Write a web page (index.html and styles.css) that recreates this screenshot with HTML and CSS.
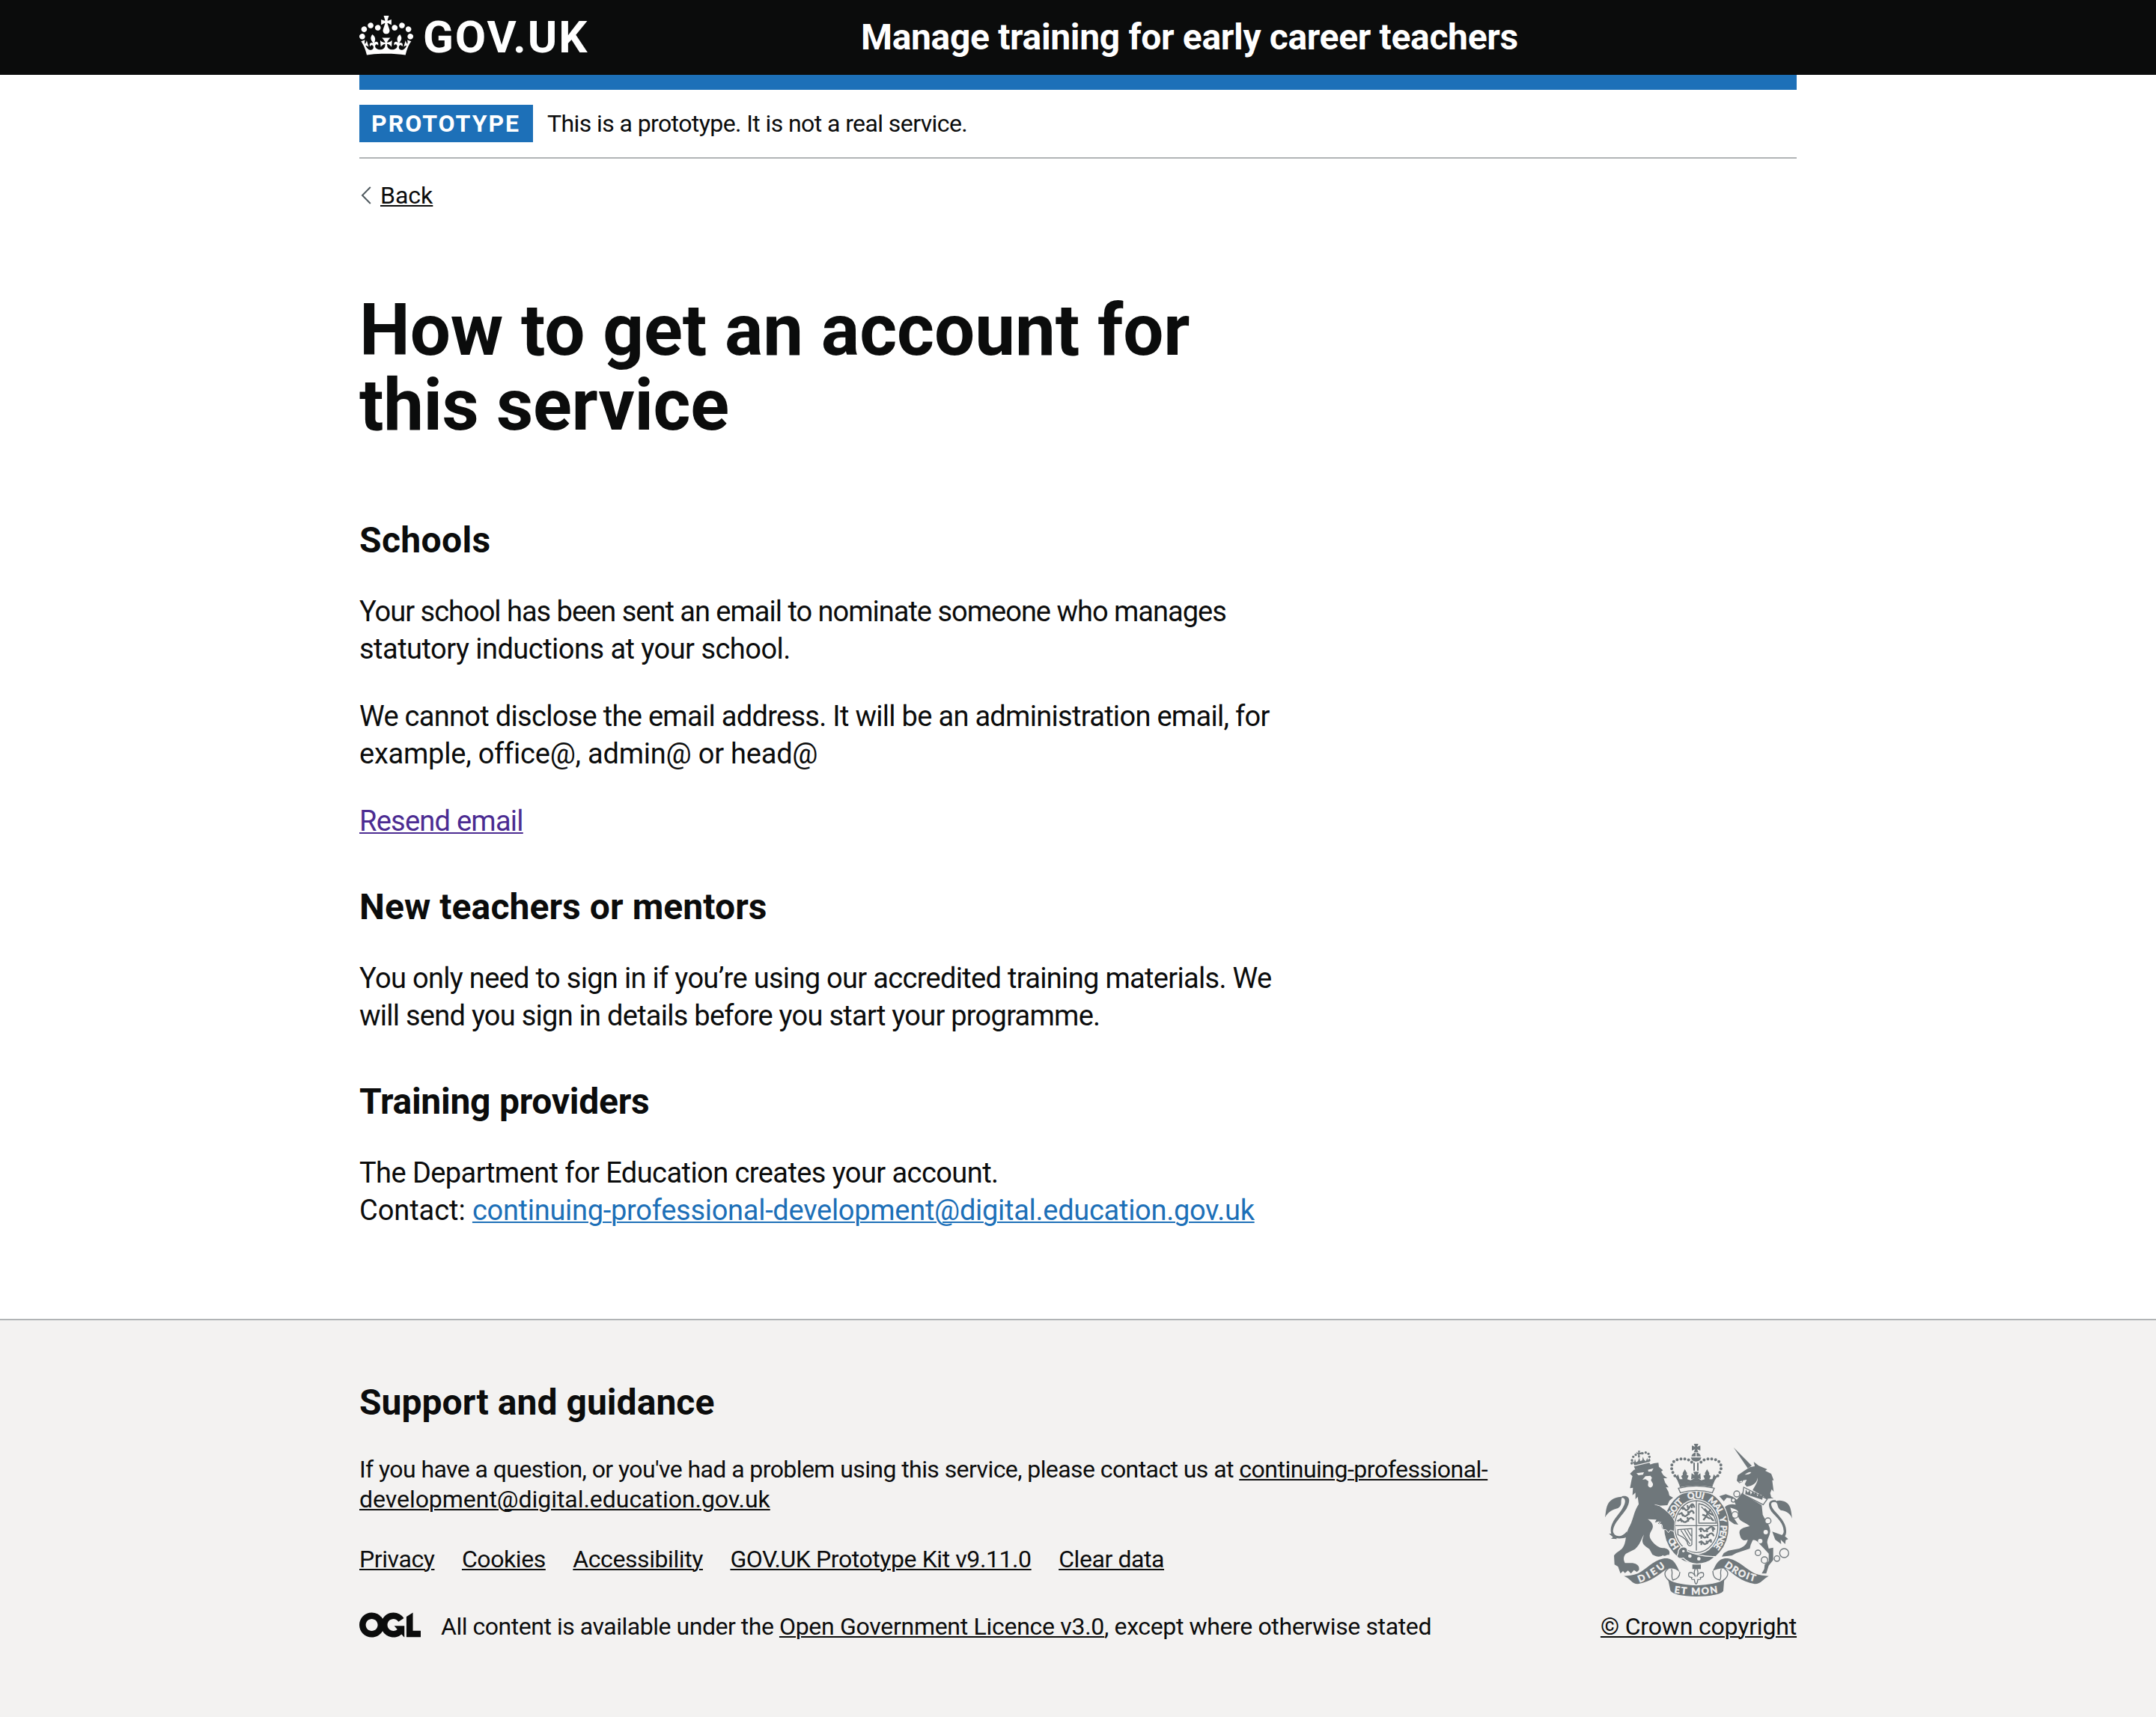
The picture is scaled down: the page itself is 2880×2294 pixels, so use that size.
FILE: index.html
```html
<!DOCTYPE html>
<html lang="en">
<head>
<meta charset="utf-8">
<title>How to get an account for this service</title>
<link rel="stylesheet" href="styles.css">
</head>
<body>
<header class="header">
  <div class="container header-inner">
    <a class="logo" href="#">
      <svg class="logo-crown" viewBox="0 0 132 97" aria-hidden="true"><path fill="currentColor" fill-rule="evenodd" d="M25 30.2c3.5 1.5 7.7-.2 9.1-3.7 1.5-3.6-.2-7.8-3.9-9.2-3.6-1.4-7.6.3-9.1 3.9-1.4 3.5.3 7.5 3.9 9zM9 39.5c3.6 1.5 7.8-.2 9.2-3.7 1.5-3.6-.2-7.8-3.9-9.1-3.6-1.5-7.6.2-9.1 3.8-1.4 3.5.3 7.5 3.8 9zM4.4 57.2c3.5 1.5 7.7-.2 9.1-3.8 1.5-3.6-.2-7.7-3.9-9.1-3.5-1.5-7.6.3-9.1 3.8-1.4 3.5.3 7.6 3.9 9.1zm38.3-21.4c3.5 1.5 7.7-.2 9.1-3.8 1.5-3.6-.2-7.7-3.9-9.1-3.6-1.5-7.6.3-9.1 3.8-1.3 3.6.4 7.7 3.9 9.1zm64.4-5.6c-3.6 1.5-7.8-.2-9.1-3.7-1.5-3.6.2-7.8 3.8-9.2 3.6-1.4 7.7.3 9.2 3.9 1.3 3.5-.4 7.5-3.9 9zm15.9 9.3c-3.6 1.5-7.7-.2-9.1-3.7-1.5-3.6.2-7.8 3.7-9.1 3.6-1.5 7.7.2 9.2 3.8 1.5 3.5-.3 7.5-3.8 9zm4.7 17.7c-3.6 1.5-7.8-.2-9.2-3.8-1.5-3.6.2-7.7 3.9-9.1 3.6-1.5 7.7.3 9.2 3.8 1.3 3.5-.4 7.6-3.9 9.1zM89.3 35.8c-3.6 1.5-7.8-.2-9.2-3.8-1.4-3.6.2-7.7 3.9-9.1 3.6-1.5 7.7.3 9.2 3.8 1.4 3.6-.3 7.7-3.9 9.1zM69.7 17.7l8.9 4.7V9.3l-8.9 2.8c-.2-.3-.5-.6-.9-.9L72.4 0H59.6l3.5 11.2c-.3.3-.6.5-.9.9l-8.8-2.8v13.1l8.8-4.7c.3.3.6.7.9.9l-5 15.4v.1c-.2.8-.4 1.6-.4 2.4 0 4.1 3.1 7.5 7 8.1h.2c.3 0 .7.1 1 .1.4 0 .7 0 1-.1h.2c4-.6 7.1-4.1 7.1-8.1 0-.8-.1-1.7-.4-2.4V34l-5.1-15.4c.4-.2.7-.6 1-.9zM66 92.8c16.9 0 32.8 1.1 47.1 3.2 4-16.9 8.9-26.7 14-33.5l-9.6-3.4c1 4.9 1.1 7.2 0 10.2-1.5-1.4-3-4.3-4.2-8.7L108.6 76c2.8-2 5-3.2 7.5-3.3-4.4 9.4-10 11.9-13.6 11.2-4.3-.8-6.3-4.6-5.6-7.9 1-4.7 5.7-5.9 8-.5 4.3-8.7-3-11.4-7.6-8.8 7.1-7.2 7.9-13.5 2.1-21.1-8 6.1-8.1 12.3-4.5 20.8-4.7-5.4-12.1-2.5-9.5 6.2 3.4-5.2 7.9-2 7.2 3.1-.6 4.3-6.4 7.8-13.5 7.2-10.3-.9-10.9-8-11.2-13.8 2.5-.5 7.1 1.8 11 7.3L80.2 60c-4.1 4.4-8 5.3-12.3 5.4 1.4-4.4 8-11.6 8-11.6H55.5s6.4 7.2 7.9 11.6c-4.2-.1-8-1-12.3-5.4l1.4 16.4c3.9-5.5 8.5-7.7 10.9-7.3-.3 5.8-.9 12.8-11.1 13.8-7.2.6-12.9-2.9-13.5-7.2-.7-5 3.8-8.3 7.1-3.1 2.7-8.7-4.6-11.6-9.4-6.2 3.7-8.5 3.6-14.7-4.6-20.8-5.8 7.6-5 13.9 2.2 21.1-4.7-2.6-11.9.1-7.7 8.8 2.3-5.5 7.1-4.2 8.1.5.7 3.3-1.3 7.1-5.7 7.9-3.5.7-9-1.8-13.5-11.2 2.5.1 4.7 1.3 7.5 3.3l-4.7-15.4c-1.2 4.4-2.7 7.2-4.3 8.7-1.1-3-.9-5.3 0-10.2l-9.5 3.4c5 6.9 9.9 16.7 14 33.5 14.8-2.1 30.8-3.2 47.7-3.2z"/></svg>
      <span class="logo-text">GOV.UK</span>
    </a>
    <a class="service-name" href="#">Manage training for early career teachers</a>
  </div>
</header>

<div class="container">
  <div class="header-bar"></div>
  <div class="phase-banner">
    <strong class="tag">PROTOTYPE</strong>
    <span class="phase-text">This is a prototype. It is not a real service.</span>
  </div>
  <a class="back-link" href="#">
    <svg class="back-arrow" viewBox="0 0 14 24" aria-hidden="true"><path d="M12.8 1L2 12l10.8 11" fill="none" stroke="#505a5f" stroke-width="2"/></svg>
    <span class="link">Back</span>
  </a>

  <main class="main">
    <h1 class="heading-xl"><span class="line">How to get an account for</span> <span class="line title-end">this service</span></h1>

    <h2 class="heading-m heading-schools">Schools</h2>
    <p class="body"><span class="line school-1">Your school has been sent an email to nominate someone who manages</span> <span class="line school-2">statutory inductions at your school.</span></p>
    <p class="body"><span class="line">We cannot disclose the email address. It will be an administration email, for</span> <span class="line address-2">example, office@, admin@ or head@</span></p>
    <p class="body"><a class="link link-visited" href="#">Resend email</a></p>

    <h2 class="heading-m">New teachers or mentors</h2>
    <p class="body"><span class="line signin-1">You only need to sign in if you’re using our accredited training materials. We</span> <span class="line signin-2">will send you sign in details before you start your programme.</span></p>

    <h2 class="heading-m heading-providers">Training providers</h2>
    <p class="body"><span class="line provider-1">The Department for Education creates your account.</span> <span class="line provider-2">Contact: <a class="link link-blue" href="#">continuing-professional-development@digital.education.gov.uk</a></span></p>
  </main>
</div>

<footer class="footer">
  <div class="container footer-inner">
    <div class="footer-content">
      <h2 class="heading-m">Support and guidance</h2>
      <p class="footer-body"><span class="line support-1">If you have a question, or you've had a problem using this service, please contact us at <a class="link" href="#">continuing-professional-</a></span> <a class="link line support-2" href="#"><span>development@digital.education.gov.uk</span></a></p>
      <nav class="footer-nav">
        <a class="link" href="#">Privacy</a>
        <a class="link" href="#">Cookies</a>
        <a class="link" href="#">Accessibility</a>
        <a class="link" href="#">GOV.UK Prototype Kit v9.11.0</a>
        <a class="link" href="#">Clear data</a>
      </nav>
      <div class="licence">
        <svg class="ogl" viewBox="0 0 483.2 195.7" role="img" aria-label="Open Government Licence"><path fill="currentColor" d="M421.5 142.8V.1l-50.7 32.3v161.1h112.4v-50.7zm-122.3-9.6A47.12 47.12 0 0 1 221 97.8c0-26 21.1-47.1 47.1-47.1 16.7 0 31.4 8.7 39.7 21.8l42.7-27.2A97.63 97.63 0 0 0 268.1 0c-36.5 0-68.3 20.1-85.1 49.7A98 98 0 0 0 97.8 0C43.9 0 0 43.9 0 97.8s43.9 97.8 97.8 97.8c36.5 0 68.3-20.1 85.1-49.7a97.76 97.76 0 0 0 149.6 25.4l19.4 22.2h3v-87.8h-80l24.3 27.5zM97.8 145c-26 0-47.1-21.1-47.1-47.1s21.1-47.1 47.1-47.1 47.1 21.1 47.1 47.1S123.8 145 97.8 145"/></svg>
        <span class="licence-text">All content is available under the <a class="link" href="#">Open Government Licence v3.0</a><span class="licence-end">, except where otherwise stated</span></span>
      </div>
    </div>
    <a class="copyright" href="#">
      <svg class="crest" viewBox="72 60 750 612" aria-hidden="true">
        <defs>
          <path id="motto-dieu" d="M210 616Q264 597 324 546"/>
          <path id="motto-mon" d="M349 657Q438 672 528 656"/>
          <path id="motto-droit" d="M549 551Q610 598 676 613"/>
          <path id="garter" d="M371 474A97 114 0 1 1 496 483"/>
        </defs>
        <!-- lion -->
        <g fill="#6f777b">
          <path d="M188 151L250 136 256 148 193 163zM180 128l10 18 60-14 2-16-8 12-3-12-5 14-8-6-4-12-3 14-8 4-4-14-5 14-8 4-4-14-3 14zM199 99l-2-5 9 3-2-9h9l-3 8 9-2-1 9-8-2 2 14h-8l1-13z"/>
          <circle cx="180" cy="126" r="5"/><circle cx="179" cy="138" r="5"/><circle cx="185" cy="112" r="5"/><circle cx="195" cy="104" r="5"/><circle cx="222" cy="98" r="5"/><circle cx="235" cy="95" r="5"/><circle cx="246" cy="100" r="5"/><circle cx="250" cy="112" r="5"/><circle cx="249" cy="126" r="5"/>
          <path d="M172 180L188 164 225 152 268 138 286 136 288 152 304 166 297 172 306 186 322 198 307 198 313 216 327 235 316 234 326 252 330 268 345 276 330 288 322 306 290 308 310 335 330 348 342 368 342 396 347 410 335 404 332 416 322 404 314 415 310 398 300 400 298 384 284 380 292 370 272 376 278 364 243 362C266 378 268 392 258 408C248 424 248 436 262 452C274 466 286 476 304 478C324 478 336 490 328 506C320 500 314 516 304 506C292 516 276 512 262 504L250 482C232 470 220 462 222 444L228 424C216 444 212 466 192 482L156 500C146 510 144 524 152 538L176 538C196 538 212 548 208 566L200 574 188 566 176 580 164 568 152 578 144 570 134 580 124 552 110 544 108 508C118 494 132 490 142 478C160 454 150 424 172 388C186 360 188 330 207 302L203 272 194 282 194 256 182 266 184 236 172 238 178 206 182 190z"/>
          <path d="M72 355C76 330 76 306 92 290C108 274 132 272 142 272C130 290 146 302 124 318C104 324 86 330 72 355zM88 420C98 420 104 418 110 428L120 442 96 440 104 434z"/>
          <path d="M140 270C172 264 176 288 158 320C134 356 108 376 104 408C104 430 136 442 160 410L164 434C140 438 122 446 100 428C88 402 98 376 124 344C150 312 164 280 140 276z"/>
        </g>
        <g fill="#f3f2f1">
          <path d="M198 178L228 174 224 184 206 186zM244 164l22-6-6 12-14 2zM234 190l20-2 6 8-4 10 8 14c2 18-18 20-20 6l2-16-12-8-12 2z"/>
        </g>
        <!-- unicorn -->
        <g fill="#6f777b">
          <path d="M587 74L660 148 644 158z"/>
          <path d="M600 208L604 186 630 168 652 154 672 150 668 132 688 148 722 162 714 168 738 180 748 206 742 206 748 252 740 242 734 258 738 274 748 278 726 280C718 284 714 276 702 268L664 246C668 236 686 214 684 196C680 220 660 230 640 232L632 222 640 204 626 206 622 214 610 218z"/>
          <path d="M622 256L640 270 700 306 704 344C716 370 732 382 734 410C732 430 722 440 722 456L728 480 746 476 746 526 728 548 718 580 700 580 710 562 712 544 728 530 728 500 700 470C686 456 678 442 664 446L656 464 652 480 598 498 580 508 540 512 548 498 566 488 610 480C634 470 640 460 644 444C630 450 618 450 612 424C606 404 620 396 652 390C634 374 612 374 606 352C608 324 604 326 574 316L584 350 600 376 606 384 590 382 576 372 564 364 560 340 552 314C560 304 580 300 596 304L584 280 560 276 548 290 530 270 556 262 584 272 600 284z"/>
          <path d="M822 360C818 332 818 310 800 296C780 282 756 288 752 292C770 300 758 314 776 326C800 330 814 338 822 360zM742 412l12 32 24 18-2-18 18 18 2-16 10-4-14-12z"/>
          <path d="M756 286C724 282 720 310 746 340C772 368 786 380 788 410C788 424 776 436 758 420L762 440C784 448 800 430 798 408C796 376 776 356 756 334C732 308 732 290 756 294z"/>
        </g>
        <path fill="#f3f2f1" d="M632 184q16-14 26-10-6 10-26 10zM606 214l14-6 2 6z"/>
        <g fill="#f3f2f1" stroke="#6f777b" stroke-width="4">
          <path d="M628 234L722 282 706 304 624 262z"/>
          <circle cx="600" cy="261" r="12"/><circle cx="586" cy="286" r="8"/><circle cx="593" cy="345" r="13"/><circle cx="725" cy="369" r="12"/><circle cx="685" cy="497" r="11"/><circle cx="711" cy="526" r="13"/><circle cx="761" cy="520" r="11"/><circle cx="790" cy="498" r="18"/>
        </g>
        <path fill="#6f777b" d="M634 262l2-20 8 14 8-10 4 18 8-14 6 10 8-8 4 18 10-12 4 12 10-6-4 20z"/>
        <circle cx="716" cy="414" r="9" fill="#f3f2f1"/><circle cx="694" cy="450" r="9" fill="#f3f2f1"/>
        <!-- garter and shield -->
        <ellipse cx="438" cy="392" rx="133" ry="151" fill="#f3f2f1"/>
        <ellipse cx="438" cy="392" rx="111" ry="129" fill="none" stroke="#6f777b" stroke-width="36"/>
        <ellipse cx="438" cy="392" rx="86" ry="104" fill="#f3f2f1" stroke="#6f777b" stroke-width="4"/>
        <g fill="none" stroke="#6f777b" stroke-width="4">
          <path d="M438 288V488M352 388H524"/>
          <path d="M448 300Q500 306 518 378H448zM458 312L510 370"/>
        </g>
        <g fill="none" stroke="#6f777b" stroke-width="7">
          <path d="M376 320q8-10 16 2t20-10 18 4M366 344q12-10 20 2t22-8 20 2M362 370q12-10 22 0t22-6 22 2M380 312l6 12M402 306l4 16M420 304v14M378 334l6 16M404 330l4 16M374 358l6 16M402 354l4 18"/>
          <path d="M470 320l14 14-6 18 14 8M496 322l-10 14 20 10M462 344l16 6-12 16M494 356l12 12"/>
          <path d="M448 404q12-8 18 2t20-6 26 4M448 430q12-8 18 2t20-6 22 4M448 456q12-8 18 2t20-6 10 4M456 396v18M478 398l4 16M502 398l4 14M458 422v18M480 422l4 16M458 448v18M478 448l4 14"/>
          <path stroke-width="4" d="M364 404L420 400V464Q412 474 404 464 402 440 364 424zM376 406L412 462M390 404L416 448M402 404L418 430"/>
        </g>
        <g class="crest-text crest-garter">
          <text><textPath href="#garter" startOffset="2" textLength="46">HO</textPath></text>
          <text><textPath href="#garter" startOffset="128" textLength="72">SOIT</textPath></text>
          <text><textPath href="#garter" startOffset="222" textLength="62">QUI</textPath></text>
          <text><textPath href="#garter" startOffset="302" textLength="70">MAL</textPath></text>
          <text><textPath href="#garter" startOffset="384">Y</textPath></text>
          <text><textPath href="#garter" startOffset="416" textLength="94">PENSE</textPath></text>
        </g>
        <path d="M270 304L290 308Q340 340 352 372L350 412 334 406 326 416 316 404 304 404 300 384 288 380 304 366z" fill="#6f777b" stroke="#f3f2f1" stroke-width="3"/>
        <path d="M262 300L290 312 320 350 300 376 278 362z" fill="#6f777b"/>
        <path fill="#6f777b" stroke="#f3f2f1" stroke-width="4" d="M366 488Q374 470 392 474 406 480 402 490 450 512 512 512 490 540 440 542 408 540 386 518 366 524 360 510 366 500 366 488z"/>
        <circle cx="386" cy="490" r="5" fill="#f3f2f1"/><circle cx="412" cy="510" r="7" fill="#f3f2f1"/><circle cx="448" cy="521" r="7" fill="#f3f2f1"/>
        <!-- crown -->
        <path fill="#f3f2f1" d="M366 226H510L504 264Q438 240 372 264z"/>
        <g fill="#6f777b">
          <path d="M428 60h18l-5 12 13-5v20l-13-5 5 12h-18l5-12-13 5v-20l13 5zM418 110q4-14 17-15v15zM456 110q-4-14-17-15v15zM416 115h42q-4 16-21 16t-21-16zM426 136h6v32h-6zM441 136h6v32h-6z"/>
          <path d="M348 182L362 206 370 226Q380 216 438 212 496 216 504 226L512 206 528 182 514 190 508 182 502 202 490 202 496 190 489 184 490 178 481 162 472 178 474 184 466 188 472 202 458 206 444 198 456 202 454 178 443 186 448 172h-22l5 14-12-8-2 24 14-4-16 8-14-4 6-14-8-4 2-6-9-16-9 16 1 6-7 6 6 12-12 0-6-20-6 8z"/>
          <path d="M370 226Q380 214 438 211 496 214 504 226L502 234Q438 220 372 234z"/>
        </g>
        <path fill="none" stroke="#6f777b" stroke-width="4" d="M366 238Q438 220 510 238L502 256Q438 238 374 256z"/>
        <path d="M352 188C330 160 334 124 374 121C400 118 414 126 420 134M524 188C546 160 542 124 502 121C476 118 462 126 456 134" fill="none" stroke="#6f777b" stroke-width="12" stroke-linecap="round" stroke-dasharray="0 15.5"/>
        <!-- scroll -->
        <g fill="#6f777b">
          <path d="M422 544h34v18h-34z"/>
          <path d="M148 590Q174 590 204 580C240 562 260 530 306 520 348 514 358 546 372 576 358 560 338 556 320 562 286 584 260 612 204 622 176 620 176 600 148 590z"/>
          <path d="M728 590Q702 590 672 580C636 562 612 530 568 520 526 514 516 546 504 570 520 560 544 556 560 562 590 584 616 612 672 622 700 620 706 600 728 590z"/>
          <path d="M324 600Q340 622 438 628 536 622 550 600L546 650Q530 670 438 672 346 670 334 648z"/>
        </g>
        <g fill="none" stroke="#6f777b" stroke-width="4">
          <path d="M372 574C372 592 360 604 344 606 334 592 346 578 338 562M326 560C308 572 306 588 328 608M504 570C504 592 516 604 532 606 542 592 530 578 538 562M550 560C568 572 570 588 546 608"/>
          <path d="M437 556Q424 572 434 592 424 570 408 578 402 594 420 596 414 604 430 604 432 620 437 622 442 620 444 604 460 604 454 596 472 594 466 578 450 570 440 592 450 572 437 556z"/>
        </g>
        <g class="crest-text">
          <text><textPath href="#motto-dieu" textLength="122">DIEU</textPath></text>
          <text><textPath href="#motto-mon" textLength="176">ET MON</textPath></text>
          <text><textPath href="#motto-droit" textLength="138">DROIT</textPath></text>
        </g>
      </svg>
      <span class="link">© Crown copyright</span>
    </a>
  </div>
</footer>
</body>
</html>
```

FILE: styles.css
```css
* { box-sizing: border-box; }
body {
  margin: 0;
  background: #fff;
  color: #0b0c0c;
  font-family: Roboto, "Liberation Sans", sans-serif;
  font-size: 32px;
  line-height: 40px;
  white-space: nowrap;
}
h1, h2, p { margin: 0; }
a { color: inherit; text-decoration: none; }
svg { display: block; }
.line { display: block; }
.link {
  text-decoration: underline;
  text-decoration-thickness: 2px;
  text-underline-offset: 2px;
}
.container { width: 1920px; margin: 0 auto; }

.header { background: #0b0c0c; color: #fff; }
.header-inner { display: flex; align-items: center; height: 100px; font-weight: 700; }
.logo { display: flex; width: 670px; align-items: center; gap: 13px; }
.logo-crown { width: 72px; height: 53px; margin-top: -5px; }
.logo-text { font-size: 60px; line-height: 100px; letter-spacing: 1.95px; }
.service-name { font-size: 48px; line-height: 60px; letter-spacing: -0.34px; }
.header-bar { height: 20px; background: #1d70b8; }

.phase-banner {
  display: flex;
  align-items: center;
  gap: 19px;
  padding: 20px 0;
  border-bottom: 2px solid #b1b4b6;
}
.tag { width: 232px; padding: 0 16px; background: #1d70b8; color: #fff; line-height: 50px; letter-spacing: 2px; }
.phase-text { letter-spacing: -0.59px; }
.back-link { display: flex; align-items: center; gap: 12px; width: max-content; margin-top: 29px; }
.back-arrow { width: 14px; height: 24px; margin-left: 2px; }

.main { padding: 110px 0 120px; }
.heading-xl { margin-bottom: 101px; font-size: 96px; line-height: 100px; letter-spacing: -0.06px; }
.title-end { letter-spacing: -0.35px; }
.heading-m { margin-bottom: 40px; font-size: 48px; line-height: 60px; letter-spacing: 0.08px; }
.heading-schools { letter-spacing: 0.35px; }
.heading-providers { letter-spacing: -0.25px; }
.body { margin-bottom: 40px; font-size: 38px; line-height: 50px; letter-spacing: -0.7px; }
.body:last-child { margin-bottom: 0; }
.body + .heading-m { margin-top: 60px; }
.school-1 { letter-spacing: -1px; }
.school-2 { letter-spacing: -0.52px; }
.address-2 { letter-spacing: -0.22px; }
.signin-1 { letter-spacing: -0.68px; }
.signin-2 { letter-spacing: -0.74px; }
.provider-1 { letter-spacing: -0.57px; }
.provider-2 { letter-spacing: -0.06px; }
.link-visited { color: #4c2c92; letter-spacing: -0.75px; }
.link-blue { color: #1d70b8; letter-spacing: -0.28px; }

.footer { background: #f3f2f1; border-top: 2px solid #b1b4b6; height: 532px; }
.footer-inner { display: flex; justify-content: space-between; align-items: flex-end; padding-top: 80px; }
.footer-inner .heading-m { margin-bottom: 39px; letter-spacing: 0.04px; }
.footer-body { margin-bottom: 40px; }
.support-1 { letter-spacing: -0.58px; }
.support-1 .link { letter-spacing: -0.49px; }
.support-2 { letter-spacing: -0.04px; }
.footer-nav { display: flex; gap: 36.5px; margin-bottom: 50px; letter-spacing: -0.42px; }
.licence { display: flex; align-items: center; gap: 27px; }
.ogl { width: 82px; height: 34px; margin-top: -4px; }
.licence-text { letter-spacing: -0.47px; }
.licence-text .link { letter-spacing: -0.29px; }
.licence-end { letter-spacing: -0.37px; }
.copyright { display: flex; flex-direction: column; align-items: center; gap: 20px; width: 262px; letter-spacing: -0.17px; }
.crest { width: 250px; height: 204px; }
.crest-text { fill: #f3f2f1; stroke: #f3f2f1; stroke-width: 1.4; font: 700 38px/1 Lato, sans-serif; letter-spacing: 0; }
.crest-garter { font-size: 35px; }
```
